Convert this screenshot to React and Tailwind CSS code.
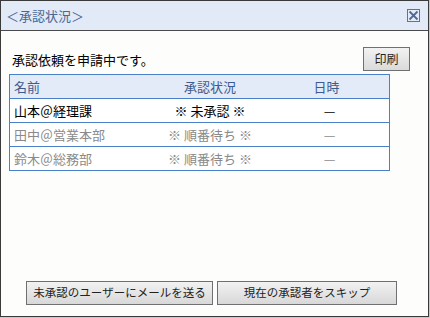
const rows = [
  { name: '山本＠経理課', status: '※ 未承認 ※', date: '—', active: true },
  { name: '田中＠営業本部', status: '※ 順番待ち ※', date: '—', active: false },
  { name: '鈴木＠総務部', status: '※ 順番待ち ※', date: '—', active: false },
];

const font = { fontFamily: '"Noto Sans CJK JP", "Noto Sans", sans-serif' };

const App = () => {
  return (
    <div className="w-[430px] h-[318px] bg-[#c8c8c8]" style={font}>
      <div className="w-[429px] h-[317px] border border-[#3a3a3a] bg-[#fdfdfb] flex flex-col">
        <div className="h-[30px] bg-[#e3eaf7] border-b border-[#4a4a4a] flex items-center justify-between pl-[5px] pr-[8px]">
          <span className="text-[13px] text-[#4a6794] leading-none">＜承認状況＞</span>
          <svg width="13" height="13" viewBox="0 0 13 13">
            <rect x="0.5" y="0.5" width="12" height="12" fill="#e6ecf7" stroke="#5b7498" />
            <path d="M2.5 2.5 L10.5 10.5 M10.5 2.5 L2.5 10.5" stroke="#4e6a94" strokeWidth="1.8" />
          </svg>
        </div>

        <div className="flex-1 flex flex-col">
          <div className="flex items-center justify-between pt-[16px] pl-[11px] pr-[18px]">
            <span className="text-[13px] text-black leading-none">承認依頼を申請中です。</span>
            <button className="w-[47px] h-[24px] border border-[#707070] bg-gradient-to-b from-[#f2f2f2] to-[#dadada] text-[12px] text-[#222] leading-none">
              印刷
            </button>
          </div>

          <div className="mt-[3px] ml-[8px] w-[381px] border border-[#4a80c8] text-[13px]">
            <div className="grid grid-cols-[140px_120px_1fr] h-[24px] items-center bg-[#e3eaf8] border-b border-[#4a80c8] text-[#3d5b8e]">
              <span className="pl-[4px]">名前</span>
              <span className="text-center">承認状況</span>
              <span className="text-center pr-[6px]">日時</span>
            </div>
            {rows.map((r, i) => (
              <div
                key={r.name}
                className={`grid grid-cols-[140px_120px_1fr] items-center bg-white ${
                  i < rows.length - 1 ? 'h-[24px] border-b border-[#4a80c8]' : 'h-[23px]'
                } ${r.active ? 'text-black' : 'text-[#8a8a8a]'}`}
              >
                <span className="pl-[4px]">{r.name}</span>
                <span className="text-center">{r.status}</span>
                <span className="text-center">{r.date}</span>
              </div>
            ))}
          </div>

          <div className="mt-auto flex gap-[4px] pl-[25px] pb-[11px]">
            <button className="w-[187px] h-[24px] border border-[#707070] bg-gradient-to-b from-[#f2f2f2] to-[#d8d8d8] text-[11.5px] text-[#222] leading-none">
              未承認のユーザーにメールを送る
            </button>
            <button className="w-[180px] h-[24px] border border-[#707070] bg-gradient-to-b from-[#f2f2f2] to-[#d8d8d8] text-[11.5px] text-[#222] leading-none">
              現在の承認者をスキップ
            </button>
          </div>
        </div>
      </div>
    </div>
  );
};

export default App;
